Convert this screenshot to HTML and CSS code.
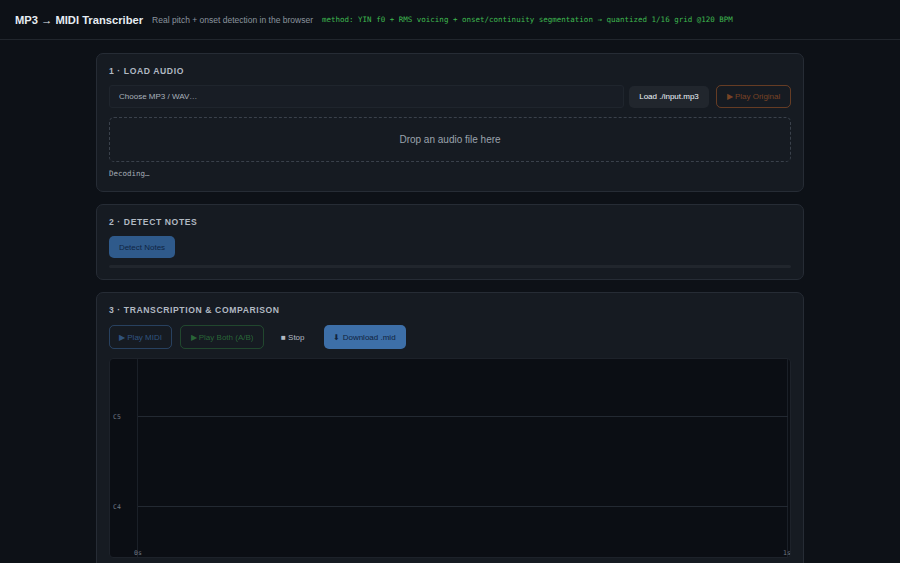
FILE: index.html
```html
<!DOCTYPE html>
<html lang="en">
<head>
<meta charset="utf-8">
<title>MP3 → MIDI Transcriber</title>
<link rel="stylesheet" href="styles.css">
</head>
<body>
<header class="topbar">
  <h1 class="title">MP3 → MIDI Transcriber</h1>
  <span class="subtitle">Real pitch + onset detection in the browser</span>
  <code class="method">method: YIN f0 + RMS voicing + onset/continuity segmentation → quantized 1/16 grid @120 BPM</code>
</header>
<main class="wrap">
  <section class="card card-first">
    <h2 class="card-title">1 · Load Audio</h2>
    <div class="row">
      <label class="file">Choose MP3 / WAV…</label>
      <button class="btn btn-secondary">Load ./input.mp3</button>
      <button class="btn btn-outline-orange" disabled>▶ Play Original</button>
    </div>
    <div class="drop">Drop an audio file here</div>
    <div class="status">Decoding…</div>
  </section>

  <section class="card card-mid">
    <h2 class="card-title">2 · Detect Notes</h2>
    <div class="row">
      <button class="btn btn-primary dim" disabled>Detect Notes</button>
    </div>
    <div class="progress"><div class="progress-fill"></div></div>
  </section>

  <section class="card card-last">
    <h2 class="card-title title-last">3 · Transcription &amp; Comparison</h2>
    <div class="row row-gap">
      <button class="btn btn-outline-blue" disabled>▶ Play MIDI</button>
      <button class="btn btn-outline-green" disabled>▶ Play Both (A/B)</button>
      <button class="btn btn-ghost">■ Stop</button>
      <button class="btn btn-primary" disabled>⬇ Download .mid</button>
    </div>
    <div class="roll">
      <svg class="roll-svg" width="682" height="198" viewBox="0 0 682 198">
        <line x1="27.5" y1="0" x2="27.5" y2="198" stroke="#1b2028" stroke-width="1"/>
        <line x1="677.5" y1="0" x2="677.5" y2="198" stroke="#1b2028" stroke-width="1"/>
        <line x1="28" y1="57.5" x2="678" y2="57.5" stroke="#232932" stroke-width="1"/>
        <line x1="28" y1="147.5" x2="678" y2="147.5" stroke="#232932" stroke-width="1"/>
        <text x="3" y="60" class="lbl">C5</text>
        <text x="3" y="150" class="lbl">C4</text>
        <text x="24" y="196" class="lbl">0s</text>
        <text x="673" y="196" class="lbl">1s</text>
      </svg>
    </div>
  </section>
</main>
</body>
</html>
```

FILE: styles.css
```css
* { box-sizing: border-box; }
html, body { margin: 0; padding: 0; }
body {
  background: #0d1117;
  color: #c9d1d9;
  font-family: "Liberation Sans", Arial, sans-serif;
  height: 563px;
  overflow: hidden;
}
.topbar {
  height: 40px;
  border-bottom: 1px solid #21262d;
  display: flex;
  align-items: center;
  padding: 0 15px;
  gap: 9px;
}
.title {
  margin: 0;
  font-size: 11.2px;
  font-weight: 700;
  color: #e6edf3;
}
.subtitle {
  font-size: 8.5px;
  color: #8b949e;
}
.method {
  font-family: "DejaVu Sans Mono", "Liberation Mono", monospace;
  font-size: 7.5px;
  color: #3fb950;
}
.wrap {
  width: 708px;
  margin: 13px auto 0;
  display: flex;
  flex-direction: column;
  gap: 12px;
}
.card {
  background: #161b22;
  border: 1px solid #262c35;
  border-radius: 7px;
  padding: 12px 12px 10px;
}
.card-first { padding-bottom: 11px; }
.card-mid { padding-bottom: 11px; }
.card-last { padding-bottom: 20px; }
.card-title {
  margin: 0 0 9px;
  font-size: 8.6px;
  line-height: 10px;
  font-weight: 700;
  text-transform: uppercase;
  letter-spacing: 0.07em;
  color: #b1b9c3;
}
.title-last { margin-bottom: 10px; }
.row {
  display: flex;
  align-items: center;
  gap: 6px;
}
.row-gap { gap: 8px; }
.file {
  flex: 1;
  height: 23px;
  display: flex;
  align-items: center;
  padding: 0 9px;
  font-size: 8px;
  color: #a9b1bb;
  background: #181d25;
  border: 1px solid #1f252d;
  border-radius: 3px;
}
.btn {
  font-family: "Liberation Sans", Arial, sans-serif;
  font-size: 8px;
  font-weight: 400;
  height: 23px;
  padding: 0 10px;
  border-radius: 5px;
  border: 1px solid transparent;
  background: transparent;
  color: #c9d1d9;
  white-space: nowrap;
}
.btn-secondary {
  background: #21262d;
  color: #f0f6fc;
  width: 80px;
  height: 22px;
  padding: 0;
  margin-left: -1px;
}
.btn-outline-orange {
  border-color: rgba(219, 109, 40, 0.4);
  color: rgba(219, 109, 40, 0.5);
  width: 75px;
  padding: 0;
  margin-left: 1px;
}
.drop {
  margin-top: 9px;
  height: 45px;
  border: 1px dashed #3a414b;
  border-radius: 5px;
  display: flex;
  align-items: center;
  justify-content: center;
  font-size: 10px;
  color: #9ba3ad;
}
.status {
  margin-top: 6px;
  font-family: "DejaVu Sans Mono", "Liberation Mono", monospace;
  font-size: 7.5px;
  line-height: 12px;
  color: #a3abb5;
}
.btn-primary {
  background: #3d6fa8;
  color: #10233d;
  height: 24px;
  width: 82px;
  padding: 0;
}
.btn-primary.dim {
  background: #2f5a8b;
  color: #0f2543;
  width: 66px;
  height: 22px;
}
.progress {
  margin-top: 7px;
  height: 3px;
  background: #21262d;
  border-radius: 2px;
}
.progress-fill { width: 0; height: 100%; }
.btn-outline-blue {
  border-color: rgba(88, 166, 255, 0.28);
  color: rgba(88, 166, 255, 0.42);
  height: 24px;
  width: 63px;
  padding: 0;
}
.btn-outline-green {
  border-color: rgba(63, 185, 80, 0.28);
  color: rgba(63, 185, 80, 0.48);
  height: 24px;
  width: 84px;
  padding: 0;
}
.btn-ghost {
  color: #b1b9c3;
  height: 24px;
  padding: 0 10px 0 8px;
}
.roll {
  margin-top: 9px;
  height: 200px;
  background: #0b0e14;
  border: 1px solid #1d222a;
  border-radius: 4px;
  overflow: hidden;
}
.roll-svg { display: block; }
.lbl {
  font-family: "DejaVu Sans Mono", "Liberation Mono", monospace;
  font-size: 6.5px;
  fill: #6e7681;
}
```
